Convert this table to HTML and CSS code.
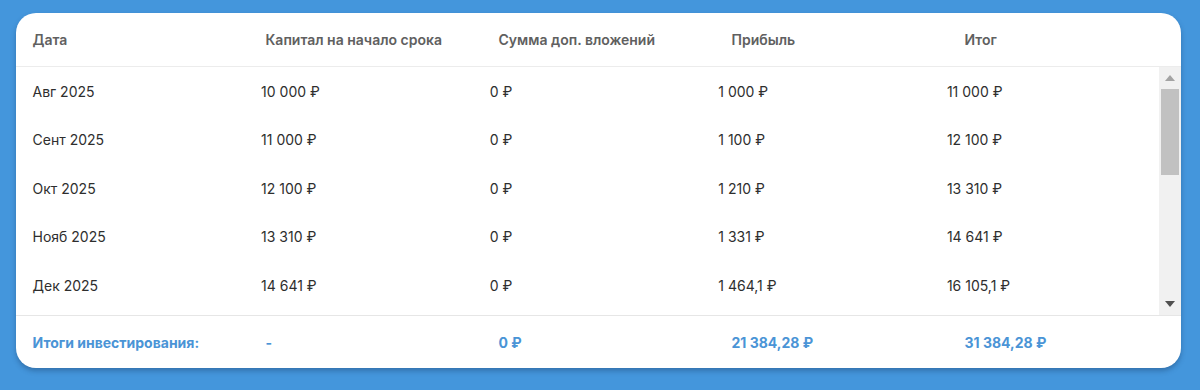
FILE: index.html
```html
<!DOCTYPE html>
<html lang="ru">
<head>
<meta charset="utf-8">
<title>Таблица инвестиций</title>
<link rel="stylesheet" href="styles.css">
</head>
<body>
<div class="card">
  <div class="row head">
    <div class="cell">Дата</div>
    <div class="cell">Капитал на начало срока</div>
    <div class="cell">Сумма доп. вложений</div>
    <div class="cell">Прибыль</div>
    <div class="cell">Итог</div>
  </div>
  <div class="body">
    <div class="rows">
      <div class="row item"><div class="cell">Авг 2025</div><div class="cell">10 000 ₽</div><div class="cell">0 ₽</div><div class="cell">1 000 ₽</div><div class="cell">11 000 ₽</div></div>
      <div class="row item"><div class="cell">Сент 2025</div><div class="cell">11 000 ₽</div><div class="cell">0 ₽</div><div class="cell">1 100 ₽</div><div class="cell">12 100 ₽</div></div>
      <div class="row item"><div class="cell">Окт 2025</div><div class="cell">12 100 ₽</div><div class="cell">0 ₽</div><div class="cell">1 210 ₽</div><div class="cell">13 310 ₽</div></div>
      <div class="row item"><div class="cell">Нояб 2025</div><div class="cell">13 310 ₽</div><div class="cell">0 ₽</div><div class="cell">1 331 ₽</div><div class="cell">14 641 ₽</div></div>
      <div class="row item"><div class="cell">Дек 2025</div><div class="cell">14 641 ₽</div><div class="cell">0 ₽</div><div class="cell">1 464,1 ₽</div><div class="cell">16 105,1 ₽</div></div>
    </div>
    <div class="scrollbar">
      <div class="sb-btn"><svg width="10" height="6" viewBox="0 0 10 6"><polygon points="0,6 10,6 5,0" fill="#a3a3a3"/></svg></div>
      <div class="sb-thumb"></div>
      <div class="sb-space"></div>
      <div class="sb-btn"><svg width="10" height="6" viewBox="0 0 10 6"><polygon points="0,0 10,0 5,6" fill="#505050"/></svg></div>
    </div>
  </div>
  <div class="row foot">
    <div class="cell">Итоги инвестирования:</div>
    <div class="cell">-</div>
    <div class="cell">0 ₽</div>
    <div class="cell">21 384,28 ₽</div>
    <div class="cell">31 384,28 ₽</div>
  </div>
</div>
</body>
</html>
```

FILE: styles.css
```css
html, body {
  margin: 0;
  padding: 0;
}
body {
  background: #4496dc;
  font-family: Inter, "Noto Sans", sans-serif;
  padding: 13px 19px 0 16px;
  height: 390px;
  box-sizing: border-box;
  overflow: hidden;
}
.card {
  background: #fff;
  border-radius: 20px;
  height: 355px;
  width: 1165px;
  box-shadow: 0 3px 5px rgba(20, 50, 90, 0.35);
  display: flex;
  flex-direction: column;
  overflow: hidden;
}
.row {
  display: grid;
  grid-template-columns: repeat(5, 1fr);
  align-items: center;
}
.cell {
  padding-left: 16.5px;
  white-space: nowrap;
}
.head {
  height: 54px;
  border-bottom: 1px solid #ececec;
  box-sizing: border-box;
  font-size: 14px;
  font-weight: 600;
  color: #606060;
}
.body {
  height: 248px;
  display: flex;
}
.rows {
  flex: 1;
  min-width: 0;
}
.item {
  height: 48.5px;
  font-size: 14px;
  color: #2e2e2e;
}
.scrollbar {
  width: 22px;
  background: #f1f1f1;
  display: flex;
  flex-direction: column;
}
.sb-btn {
  height: 22px;
  display: flex;
  align-items: center;
  justify-content: center;
}
.sb-thumb {
  height: 86px;
  margin: 0 2px 0 2px;
  background: #c1c1c1;
}
.sb-space {
  flex: 1;
}
.foot {
  flex: 1;
  border-top: 1px solid #e6e6e6;
  font-size: 14px;
  font-weight: 700;
  color: #4a94d6;
}
```
